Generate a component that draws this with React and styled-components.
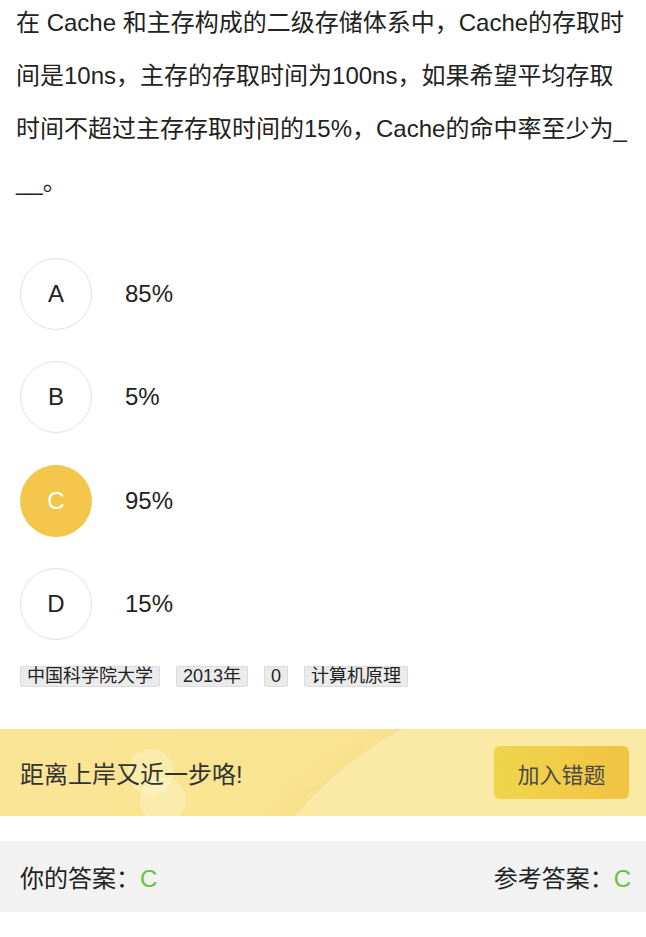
import React from "react";
import styled, { createGlobalStyle } from "styled-components";

const Global = createGlobalStyle`
  html, body { margin: 0; padding: 0; background: #fff; }
  body { font-family: "Liberation Sans", "Noto Sans CJK SC", sans-serif; color: #222; }
`;

const Page = styled.div`
  width: 646px;
  overflow: hidden;
`;

const Question = styled.p`
  margin: -4px 0 0;
  padding: 0 16px;
  font-size: 24px;
  line-height: 53px;
  color: #222;
  word-break: break-all;
`;

const Options = styled.div`
  display: flex;
  flex-direction: column;
  gap: 31.4px;
  margin-top: 50px;
  padding: 0 20px;
`;

const Row = styled.div`
  display: flex;
  align-items: center;
  gap: 33px;
`;

const Circle = styled.div`
  width: 72px;
  height: 72px;
  box-sizing: border-box;
  border-radius: 50%;
  display: flex;
  align-items: center;
  justify-content: center;
  font-size: 24px;
  border: 1px solid ${(p) => (p.$active ? "#f4c64c" : "#e2e2e2")};
  background: ${(p) => (p.$active ? "#f4c64c" : "#fff")};
  color: ${(p) => (p.$active ? "#fff" : "#222")};
`;

const Label = styled.div`
  font-size: 24px;
  color: #222;
`;

const Tags = styled.div`
  display: flex;
  gap: 16px;
  margin-top: 26px;
  padding: 0 20px;
`;

const Tag = styled.span`
  font-size: 18px;
  line-height: 19px;
  padding: 0 6px;
  background: #ebebeb;
  border: 1px solid #dcdcdc;
  border-radius: 2px;
  color: #222;
`;

const Banner = styled.div`
  position: relative;
  overflow: hidden;
  margin-top: 42px;
  height: 87px;
  display: flex;
  align-items: center;
  justify-content: space-between;
  padding: 0 17px 0 20px;
  background: linear-gradient(90deg, #f9e594 0%, #f9e491 45%, #fae79c 100%);
`;

const Arc = styled.div`
  position: absolute;
  left: 215px;
  top: -40px;
  width: 700px;
  height: 700px;
  border-radius: 50%;
  background: #fbeaa5;
  box-shadow: -10px 0 18px rgba(240, 215, 120, 0.35);
`;

const Bubble = styled.div`
  position: absolute;
  border-radius: 50%;
  background: rgba(255, 250, 220, 0.35);
  width: ${(p) => p.$size}px;
  height: ${(p) => p.$size}px;
  left: ${(p) => p.$x}px;
  top: ${(p) => p.$y}px;
`;

const BannerText = styled.div`
  position: relative;
  font-size: 24px;
  color: #333;
`;

const Button = styled.button`
  position: relative;
  width: 135px;
  height: 53px;
  border: none;
  border-radius: 6px;
  background: linear-gradient(90deg, #efd54c 0%, #f2c343 100%);
  font-family: inherit;
  font-size: 22px;
  color: #4a4a4a;
  padding: 0;
`;

const AnswerBar = styled.div`
  margin-top: 25px;
  height: 71px;
  background: #f2f2f2;
  display: flex;
  align-items: center;
  justify-content: space-between;
  padding: 0 15px 0 20px;
  font-size: 24px;
  color: #222;
`;

const Green = styled.span`
  color: #67c23a;
`;

const options = [
  { k: "A", v: "85%" },
  { k: "B", v: "5%" },
  { k: "C", v: "95%", active: true },
  { k: "D", v: "15%" },
];

export default function App() {
  return (
    <Page>
      <Global />
      <Question>
        在 Cache 和主存构成的二级存储体系中，Cache的存取时间是10ns，主存的存取时间为100ns，如果希望平均存取时间不超过主存存取时间的15%，Cache的命中率至少为___。
      </Question>
      <Options>
        {options.map((o) => (
          <Row key={o.k}>
            <Circle $active={o.active}>{o.k}</Circle>
            <Label>{o.v}</Label>
          </Row>
        ))}
      </Options>
      <Tags>
        <Tag>中国科学院大学</Tag>
        <Tag>2013年</Tag>
        <Tag>0</Tag>
        <Tag>计算机原理</Tag>
      </Tags>
      <Banner>
        <Arc />
        <Bubble $size={46} $x={128} $y={20} />
        <Bubble $size={46} $x={140} $y={48} />
        <BannerText>距离上岸又近一步咯!</BannerText>
        <Button>加入错题</Button>
      </Banner>
      <AnswerBar>
        <span>
          你的答案：<Green>C</Green>
        </span>
        <span>
          参考答案：<Green>C</Green>
        </span>
      </AnswerBar>
    </Page>
  );
}
